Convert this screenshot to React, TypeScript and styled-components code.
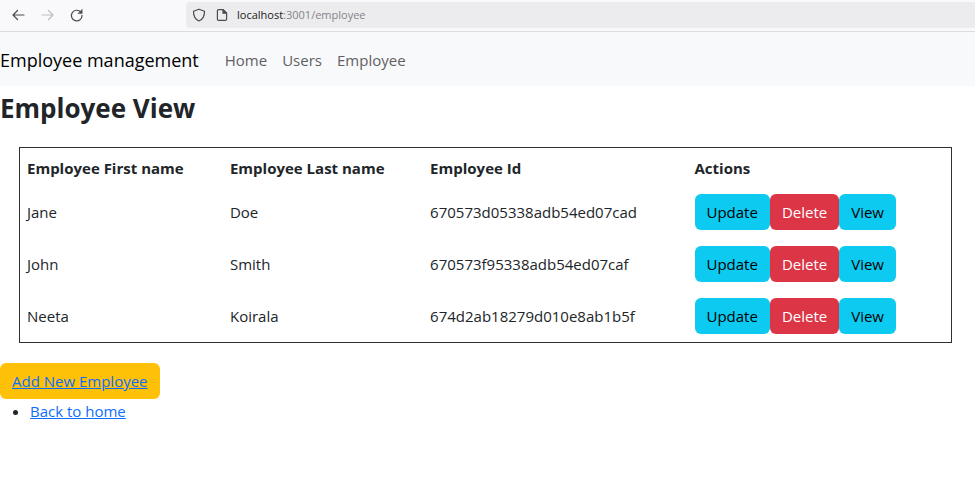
import React from "react";
import styled, { createGlobalStyle } from "styled-components";

const GlobalStyle = createGlobalStyle`
  *, *::before, *::after { box-sizing: border-box; }
  body {
    margin: 0;
    background: #fff;
    color: #212529;
    font-family: "Segoe UI", "Open Sans", "Noto Sans", sans-serif;
    font-size: 15px;
    line-height: 22px;
  }
`;

const BrowserBar = styled.div`
  display: flex;
  align-items: center;
  height: 32px;
  padding-bottom: 2px;
  background: #f9f9fb;
  border-bottom: 1px solid #dcdce0;
`;

const BrowserButtons = styled.div`
  display: flex;
  gap: 13px;
  width: 186px;
  padding-left: 10px;
`;

const IconButton = styled.button`
  display: flex;
  padding: 0;
  border: 0;
  background: none;
  color: #4b4b53;

  &:disabled { color: #bdbdc1; }
`;

const AddressBar = styled.div`
  display: flex;
  flex: 1;
  align-items: center;
  gap: 7px;
  height: 26px;
  padding-left: 5px;
  border-radius: 4px 0 0 4px;
  background: #ececee;
  color: #4b4b53;
`;

const Address = styled.span`
  color: #85858a;
  font-size: 11px;
  line-height: 16px;
`;

const Host = styled.span`
  color: #1b1b20;
`;

const Navbar = styled.nav`
  display: flex;
  align-items: center;
  height: 54px;
  padding-top: 2px;
  background: #f8f9fb;
`;

const Brand = styled.a`
  margin-right: 26px;
  color: #000;
  font-size: 18px;
  line-height: 28px;
  text-decoration: none;
`;

const NavLinks = styled.div`
  display: flex;
  gap: 15px;
`;

const NavLink = styled.a`
  color: #5f6062;
  text-decoration: none;
`;

const Title = styled.h1`
  margin: 5px 0 22px;
  font-size: 26px;
  font-weight: 700;
  line-height: 34px;
`;

const Table = styled.table`
  width: calc(100% - 42px);
  margin: 0 23px 20px 19px;
  border: 1px solid #303030;
  border-spacing: 0;
  table-layout: fixed;
`;

const HeadCell = styled.th<{ $share: string }>`
  width: ${({ $share }) => $share};
  height: 38px;
  padding: 1px 7px 0;
  font-weight: 700;
  text-align: left;
`;

const Cell = styled.td`
  height: 52px;
  padding: 0 7px;
`;

const Actions = styled.div`
  display: flex;
`;

const tones = {
  info: ["#0dcaf0", "#000"],
  danger: ["#dc3545", "#fff"],
};

const Button = styled.button<{ $tone: keyof typeof tones }>`
  height: 36px;
  padding: 0 12px;
  border: 0;
  border-radius: 6px;
  background: ${({ $tone }) => tones[$tone][0]};
  color: ${({ $tone }) => tones[$tone][1]};
  font: inherit;
`;

const AddLink = styled.a`
  display: inline-flex;
  align-items: center;
  height: 36px;
  padding: 0 12px;
  border-radius: 6px;
  background: #ffc107;
  color: #0d6efd;
  text-decoration: underline;
`;

const LinkList = styled.ul`
  margin: 0;
  padding: 1px 0 0 30px;
`;

const TextLink = styled.a`
  color: #0d6efd;
`;

const Svg = styled.svg`
  display: block;
  fill: none;
  stroke: currentColor;
  stroke-width: 1.2;
  stroke-linecap: round;
  stroke-linejoin: round;
`;

const employees = [
  { first: "Jane", last: "Doe", id: "670573d05338adb54ed07cad" },
  { first: "John", last: "Smith", id: "670573f95338adb54ed07caf" },
  { first: "Neeta", last: "Koirala", id: "674d2ab18279d010e8ab1b5f" },
];

export default function App() {
  return (
    <>
      <GlobalStyle />
      <BrowserBar>
        <BrowserButtons>
          <IconButton aria-label="Back">
            <Svg width="16" height="16" viewBox="0 0 16 16">
              <path d="M14 8H3M7.5 3.5 3 8l4.5 4.5" />
            </Svg>
          </IconButton>
          <IconButton aria-label="Forward" disabled>
            <Svg width="16" height="16" viewBox="0 0 16 16">
              <path d="M3 8h11M9.5 3.5 14 8l-4.5 4.5" />
            </Svg>
          </IconButton>
          <IconButton aria-label="Reload">
            <Svg width="16" height="16" viewBox="0 0 16 16">
              <path d="M12.8 5.2A5.3 5.3 0 1 0 14 8.4" />
              <path d="M14.2 2.6v4h-4z" fill="currentColor" strokeWidth="0.5" />
            </Svg>
          </IconButton>
        </BrowserButtons>
        <AddressBar>
          <Svg width="16" height="16" viewBox="0 0 16 16">
            <path d="M8 2.2 13.5 4.2C13.6 8.8 12 12.2 8 14 4 12.2 2.4 8.8 2.5 4.2z" />
          </Svg>
          <Svg width="16" height="16" viewBox="0 0 16 16">
            <path d="M4.6 2.6h4.6l3.4 3.4v6.2a1.2 1.2 0 0 1-1.2 1.2H4.6a1.2 1.2 0 0 1-1.2-1.2V3.8a1.2 1.2 0 0 1 1.2-1.2z" />
            <path d="M9 2.8v3.4h3.4z" fill="currentColor" />
          </Svg>
          <Address>
            <Host>localhost</Host>:3001/employee
          </Address>
        </AddressBar>
      </BrowserBar>
      <Navbar>
        <Brand href="#">Employee management</Brand>
        <NavLinks>
          <NavLink href="#home">Home</NavLink>
          <NavLink href="#users">Users</NavLink>
          <NavLink href="#employee">Employee</NavLink>
        </NavLinks>
      </Navbar>
      <main>
        <Title>Employee View</Title>
        <Table>
          <thead>
            <tr>
              <HeadCell scope="col" $share="21.8%">Employee First name</HeadCell>
              <HeadCell scope="col" $share="21.5%">Employee Last name</HeadCell>
              <HeadCell scope="col" $share="28.4%">Employee Id</HeadCell>
              <HeadCell scope="col" $share="28.3%">Actions</HeadCell>
            </tr>
          </thead>
          <tbody>
            {employees.map(({ first, last, id }) => (
              <tr key={id}>
                <Cell>{first}</Cell>
                <Cell>{last}</Cell>
                <Cell>{id}</Cell>
                <Cell>
                  <Actions>
                    <Button $tone="info">Update</Button>
                    <Button $tone="danger">Delete</Button>
                    <Button $tone="info">View</Button>
                  </Actions>
                </Cell>
              </tr>
            ))}
          </tbody>
        </Table>
        <AddLink href="#add">Add New Employee</AddLink>
        <LinkList>
          <li>
            <TextLink href="#home">Back to home</TextLink>
          </li>
        </LinkList>
      </main>
    </>
  );
}
